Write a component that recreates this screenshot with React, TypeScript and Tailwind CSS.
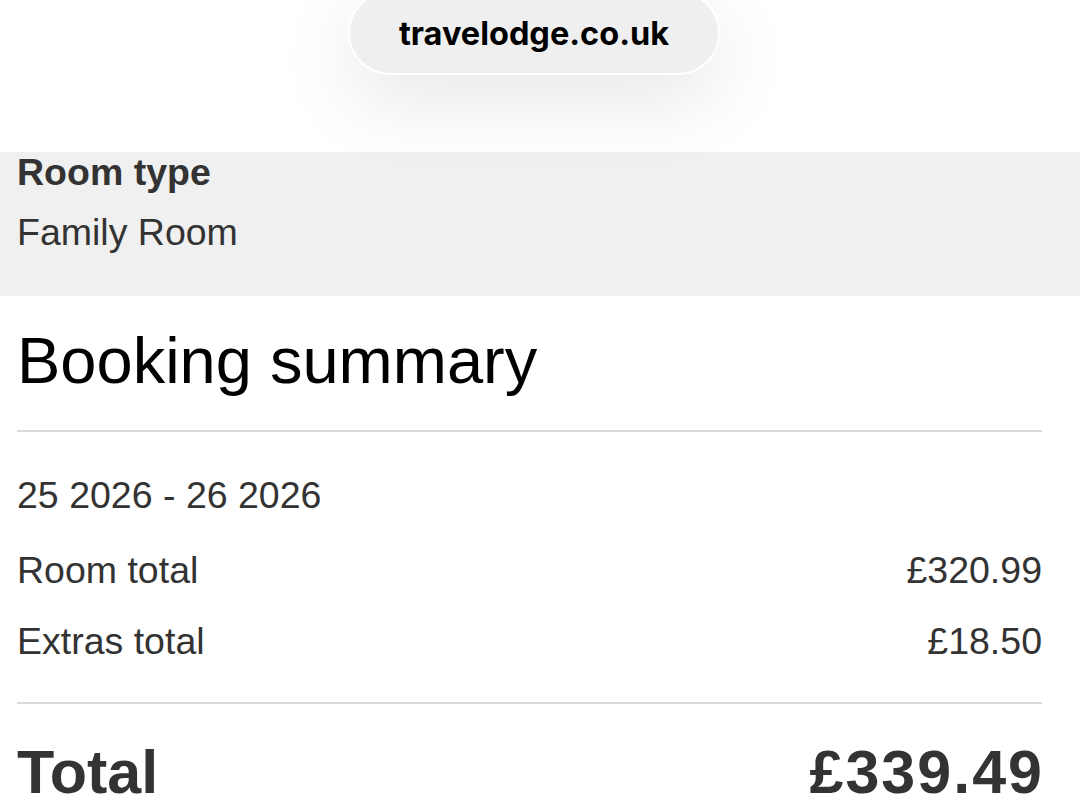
import React from "react";

const sans = { fontFamily: '"Liberation Sans", Arial, sans-serif' };

export default function App() {
  return (
    <div className="relative w-[1080px] h-[808px] overflow-hidden bg-white text-[#333]" style={sans}>
      <div className="absolute left-[348px] top-[-9px] z-10 flex h-[84px] w-[372px] items-center justify-center rounded-full border-2 border-white bg-[#efefef] shadow-[0_24px_80px_rgba(0,0,0,0.10)]">
        <span className="pt-[2px] text-[32.5px] font-bold text-black" style={{ fontFamily: 'Inter, "Noto Sans", sans-serif' }}>
          travelodge.co.uk
        </span>
      </div>
      <div className="h-[152px]" />
      <div className="flex h-[144px] flex-col bg-[#f0f0f0] pl-[17px]">
        <div className="text-[37.5px] font-bold leading-[40px]">Room type</div>
        <div className="mt-[20px] text-[37.5px] leading-[40px]">Family Room</div>
      </div>
      <div className="pl-[17px] pr-[38px]">
        <h1 className="mt-[27px] text-[65px] leading-[76px] text-black">Booking summary</h1>
        <div className="mt-[31px] h-[2px] bg-[#dadada]" />
        <div className="mt-[41px] text-[37.5px] leading-[44px]">25 2026 - 26 2026</div>
        <div className="mt-[31px] flex justify-between text-[37.5px] leading-[44px]">
          <span>Room total</span>
          <span>£320.99</span>
        </div>
        <div className="mt-[27px] flex justify-between text-[37.5px] leading-[44px]">
          <span>Extras total</span>
          <span>£18.50</span>
        </div>
        <div className="mt-[39px] h-[2px] bg-[#dadada]" />
        <div className="mt-[33px] flex justify-between text-[61px] font-bold leading-[70px]">
          <span>Total</span>
          <span className="tracking-[2px] -mr-[2px]">£339.49</span>
        </div>
      </div>
    </div>
  );
}
